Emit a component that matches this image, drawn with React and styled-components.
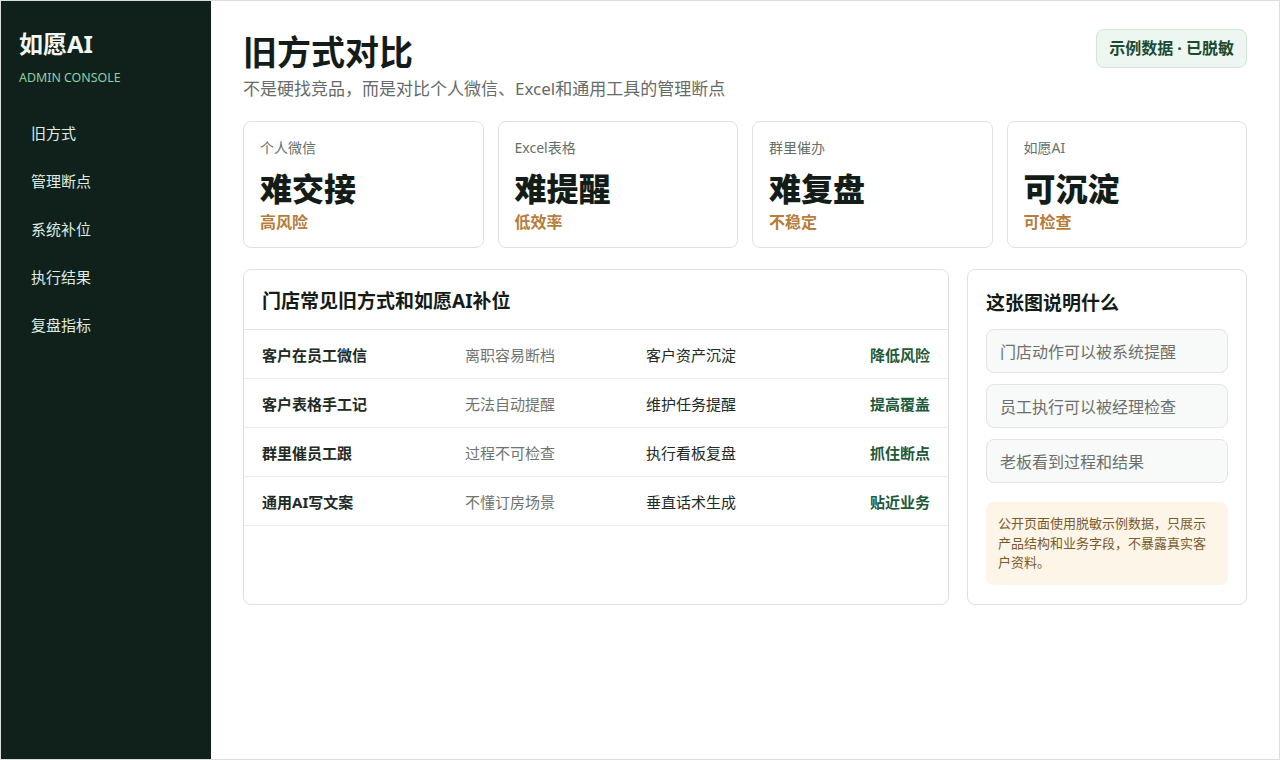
import React from 'react'
import styled, { createGlobalStyle } from 'styled-components'

const GlobalStyle = createGlobalStyle`
    html, body {
        margin: 0;
        padding: 0;
        background: #ffffff;
    }
    * {
        box-sizing: border-box;
    }
    body {
        font-family: "Noto Sans", "Noto Sans CJK SC", sans-serif;
        color: #16201c;
    }
`

const Frame = styled.div`
    display: flex;
    width: 1280px;
    height: 760px;
    border: 1px solid #dcdedd;
    overflow: hidden;
`
const Sidebar = styled.aside`
    width: 210px;
    flex-shrink: 0;
    background: #10211b;
    padding: 26px 18px;
`
const Brand = styled.div`
    font-size: 24px;
    font-weight: 700;
    color: #f3f7f4;
    line-height: 34px;
`
const BrandSub = styled.div`
    margin-top: 8px;
    font-size: 12.4px;
    color: #8fcfa6;
`
const Nav = styled.nav`
    margin-top: 22px;
    display: flex;
    flex-direction: column;
`
const NavItem = styled.div`
    padding: 0 12px;
    height: 48px;
    display: flex;
    align-items: center;
    font-size: 15px;
    color: #dfece5;
`
const Main = styled.main`
    flex: 1;
    padding: 28px 32px;
`
const Header = styled.div`
    display: flex;
    justify-content: space-between;
    align-items: flex-start;
`
const Title = styled.h1`
    margin: 0;
    font-size: 34px;
    font-weight: 700;
    line-height: 46px;
    color: #141c18;
`
const Subtitle = styled.p`
    margin: 2px 0 0;
    font-size: 17px;
    line-height: 24px;
    color: #666b68;
`
const Badge = styled.div`
    padding: 7px 12px;
    line-height: 23px;
    background: #edf6f0;
    border: 1px solid #d2e6d9;
    border-radius: 8px;
    font-size: 16px;
    font-weight: 700;
    color: #1b4a33;
`
const Cards = styled.div`
    margin-top: 20px;
    display: grid;
    grid-template-columns: repeat(4, 1fr);
    gap: 14px;
`
const Card = styled.div`
    border: 1px solid #dfe1e0;
    border-radius: 8px;
    padding: 16px 16px 14px;
`
const CardLabel = styled.div`
    font-size: 14px;
    line-height: 20px;
    color: #66706b;
`
const CardValue = styled.div`
    margin-top: 11px;
    font-size: 32px;
    font-weight: 800;
    line-height: 40px;
    color: #141c18;
`
const CardNote = styled.div`
    margin-top: 2px;
    font-size: 16px;
    line-height: 22px;
    font-weight: 700;
    color: #b67d3c;
`
const Lower = styled.div`
    margin-top: 21px;
    display: grid;
    grid-template-columns: 1fr 280px;
    gap: 18px;
`
const Panel = styled.section`
    border: 1px solid #dfe1e0;
    border-radius: 8px;
    padding: ${props => (props.flush ? '0' : '20px 18px 19px')};
`
const PanelTitle = styled.h2`
    margin: 0;
    font-size: 19px;
    font-weight: 700;
    line-height: 26px;
    color: #141c18;
    padding: ${props => (props.flush ? '18px 18px 15px' : '0')};
    border-bottom: ${props => (props.flush ? '1px solid #e3e5e4' : 'none')};
`
const Row = styled.div`
    display: grid;
    grid-template-columns: 203px 181px 1fr auto;
    align-items: center;
    height: 49px;
    padding: 0 18px;
    border-bottom: 1px solid #eceeed;
    font-size: 15px;
`
const Cell = styled.div`
    color: ${props => props.color || '#222a26'};
    font-weight: ${props => (props.bold ? 700 : 400)};
`
const List = styled.div`
    margin-top: 13px;
    display: flex;
    flex-direction: column;
    gap: 11px;
`
const ListItem = styled.div`
    height: 44px;
    display: flex;
    align-items: center;
    padding: 0 13px;
    background: #f8f9f9;
    border: 1px solid #e2e5e4;
    border-radius: 8px;
    font-size: 16px;
    color: #6b706d;
`
const Notice = styled.div`
    margin-top: 19px;
    padding: 12px 12px;
    background: #fdf5e8;
    border-radius: 8px;
    font-size: 13px;
    line-height: 19.5px;
    color: #7a5a2c;
`

const navItems = ['旧方式', '管理断点', '系统补位', '执行结果', '复盘指标']

const cards = [
    { label: '个人微信', value: '难交接', note: '高风险' },
    { label: 'Excel表格', value: '难提醒', note: '低效率' },
    { label: '群里催办', value: '难复盘', note: '不稳定' },
    { label: '如愿AI', value: '可沉淀', note: '可检查' },
]

const rows = [
    ['客户在员工微信', '离职容易断档', '客户资产沉淀', '降低风险'],
    ['客户表格手工记', '无法自动提醒', '维护任务提醒', '提高覆盖'],
    ['群里催员工跟', '过程不可检查', '执行看板复盘', '抓住断点'],
    ['通用AI写文案', '不懂订房场景', '垂直话术生成', '贴近业务'],
]

const points = ['门店动作可以被系统提醒', '员工执行可以被经理检查', '老板看到过程和结果']

const App = () => {
    return (
        <>
            <GlobalStyle />
            <Frame>
                <Sidebar>
                    <Brand>如愿AI</Brand>
                    <BrandSub>ADMIN CONSOLE</BrandSub>
                    <Nav>
                        {navItems.map(item => (
                            <NavItem key={item}>{item}</NavItem>
                        ))}
                    </Nav>
                </Sidebar>
                <Main>
                    <Header>
                        <div>
                            <Title>旧方式对比</Title>
                            <Subtitle>不是硬找竞品，而是对比个人微信、Excel和通用工具的管理断点</Subtitle>
                        </div>
                        <Badge>示例数据 · 已脱敏</Badge>
                    </Header>
                    <Cards>
                        {cards.map(card => (
                            <Card key={card.label}>
                                <CardLabel>{card.label}</CardLabel>
                                <CardValue>{card.value}</CardValue>
                                <CardNote>{card.note}</CardNote>
                            </Card>
                        ))}
                    </Cards>
                    <Lower>
                        <Panel flush>
                            <PanelTitle flush>门店常见旧方式和如愿AI补位</PanelTitle>
                            {rows.map(row => (
                                <Row key={row[0]}>
                                    <Cell bold>{row[0]}</Cell>
                                    <Cell color="#6f7470">{row[1]}</Cell>
                                    <Cell>{row[2]}</Cell>
                                    <Cell bold color="#1d5a3c">{row[3]}</Cell>
                                </Row>
                            ))}
                        </Panel>
                        <Panel>
                            <PanelTitle>这张图说明什么</PanelTitle>
                            <List>
                                {points.map(p => (
                                    <ListItem key={p}>{p}</ListItem>
                                ))}
                            </List>
                            <Notice>公开页面使用脱敏示例数据，只展示产品结构和业务字段，不暴露真实客户资料。</Notice>
                        </Panel>
                    </Lower>
                </Main>
            </Frame>
        </>
    )
}

export default App
